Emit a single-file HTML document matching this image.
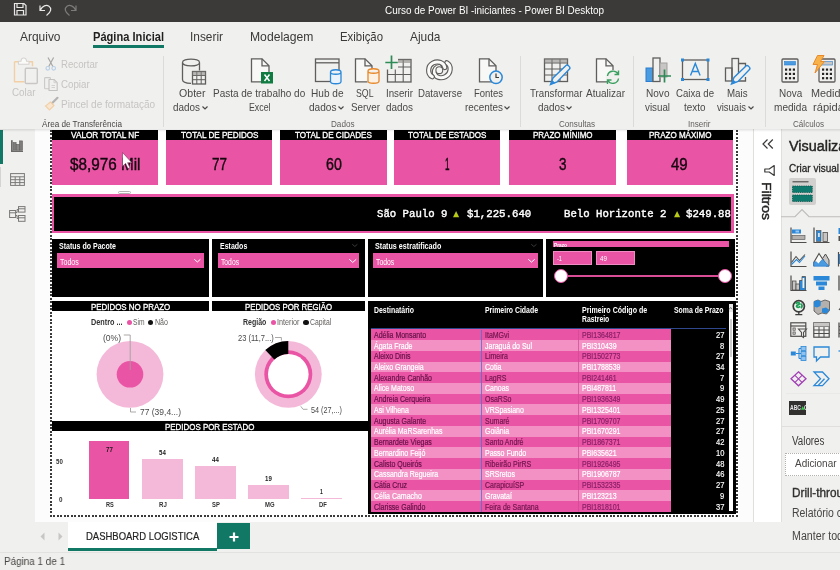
<!DOCTYPE html>
<html><head><meta charset="utf-8">
<style>
*{box-sizing:border-box;margin:0;padding:0}
html,body{width:840px;height:570px;overflow:hidden;background:#f0f0ee;font-family:"Liberation Sans",sans-serif;}
.a{position:absolute}
.t{position:absolute;white-space:nowrap;line-height:1}
svg{position:absolute;overflow:visible}
#w{position:absolute;left:0;top:0;width:840px;height:570px;overflow:hidden}
#b{position:absolute;left:0;top:0;width:840px;height:570px;will-change:transform;filter:blur(0.4px)}
</style></head><body><div id="w"><div id="b">
<!-- sec_chrome -->
<div class="a" style="left:-6.00px;top:-6.00px;width:852.00px;height:27.60px;background:#3b3a38;"></div>
<div class="t" style="left:385.00px;top:5.13px;font-size:11px;color:#ffffff;transform:scaleX(0.9023);transform-origin:0 0;">Curso de Power BI -iniciantes - Power BI Desktop</div>
<svg class="a" style="left:13px;top:2px" width="70" height="16" viewBox="0 0 70 16" fill="none" stroke="#e8e8e8" stroke-width="1.2">
<path d="M1.5 1.5h9.5l2 2v9.5h-11.5z M4 1.5v4h6v-4 M4 13v-4.500h6.500v4.500"/>
<path d="M27 3.500l0 5 5 0 M27.300 8.200c2-4.500 6-5.800 8.700-4c2.600 1.900 2.700 5.500 -2.500 9.300"/>
<path stroke="#7d7c7a" d="M63 3.500l0 5 -5 0 M62.700 8.200c-2 -4.500 -6 -5.800 -8.700 -4c-2.600 1.900 -2.700 5.500 2.500 9.300"/>
</svg>
<div class="a" style="left:-6.00px;top:21.60px;width:852.00px;height:30.40px;background:#f0f0ee;"></div>
<div class="t" style="left:20.00px;top:30.25px;font-size:13px;color:#3b3a39;transform:scaleX(0.9187);transform-origin:0 0;">Arquivo</div>
<div class="t" style="left:93.00px;top:30.25px;font-size:13px;color:#201f1e;font-weight:bold;transform:scaleX(0.8545);transform-origin:0 0;">Página Inicial</div>
<div class="a" style="left:93.00px;top:45.00px;width:71.00px;height:3.00px;background:#117865;"></div>
<div class="t" style="left:190.00px;top:30.25px;font-size:13px;color:#3b3a39;transform:scaleX(0.9136);transform-origin:0 0;">Inserir</div>
<div class="t" style="left:249.50px;top:30.25px;font-size:13px;color:#3b3a39;transform:scaleX(0.9348);transform-origin:0 0;">Modelagem</div>
<div class="t" style="left:340.00px;top:30.25px;font-size:13px;color:#3b3a39;transform:scaleX(0.8750);transform-origin:0 0;">Exibição</div>
<div class="t" style="left:409.50px;top:30.25px;font-size:13px;color:#3b3a39;transform:scaleX(0.9172);transform-origin:0 0;">Ajuda</div>
<!-- sec_ribbon -->
<div class="a" style="left:-6.00px;top:52.00px;width:852.00px;height:76.50px;background:#f0f0ee;"></div>
<div class="a" style="left:163.20px;top:56.00px;width:1.00px;height:71.00px;background:#dddbd9;"></div>
<div class="a" style="left:520.00px;top:56.00px;width:1.00px;height:71.00px;background:#dddbd9;"></div>
<div class="a" style="left:632.70px;top:56.00px;width:1.00px;height:71.00px;background:#dddbd9;"></div>
<div class="a" style="left:764.50px;top:56.00px;width:1.00px;height:71.00px;background:#dddbd9;"></div>
<svg style="left:13px;top:57px" width="26" height="28" viewBox="0 0 26 28" fill="none" ><path d="M1.500 4.800h18v4.500 M1.500 4.800v20h10" stroke="#f2cfa6" stroke-width="1.400" stroke-linejoin="round"/>
<path d="M5.500 7.300v-3h2.500c0-4.500 5.500-4.500 5.500 0h2.500v3z" fill="#fafaf9" stroke="#d6d4d2" stroke-width="1.100" stroke-linejoin="round"/>
<rect x="12.300" y="11.300" width="12" height="15.200" rx="1" stroke="#c9c7c5" stroke-width="1.400" fill="#f0f0ee"/></svg>
<div class="t" style="left:12.00px;top:87.38px;font-size:11.5px;color:#c6c4c2;transform:scaleX(0.8551);transform-origin:0 0;">Colar</div>
<svg style="left:45px;top:57px" width="12" height="14" viewBox="0 0 12 14" fill="none" ><path d="M3 0.500l5 9.300 M8.600 0.500l-5 9.300" stroke="#a9a7a5" stroke-width="1.200"/>
<circle cx="2.800" cy="11.300" r="1.800" stroke="#b9cfe6" stroke-width="1.100"/><circle cx="8.700" cy="11.300" r="1.800" stroke="#b9cfe6" stroke-width="1.100"/></svg>
<div class="t" style="left:61.30px;top:58.68px;font-size:11.5px;color:#c6c4c2;transform:scaleX(0.8390);transform-origin:0 0;">Recortar</div>
<svg style="left:44px;top:77px" width="14" height="14" viewBox="0 0 14 14" fill="none" ><rect x="0.600" y="0.600" width="5.800" height="11.200" rx=".800" stroke="#cbc9c7" stroke-width="1.100"/>
<path d="M5 2.500h5l3.200 3.200v7.800h-8.200z" fill="#f0f0ee" stroke="#c4c2c0" stroke-width="1.100" stroke-linejoin="round"/><path d="M10 2.500v3.200h3.200 M7.500 8.500h3.500 M7.500 10.500h3.500" stroke="#cfcdcb" stroke-width=".900"/></svg>
<div class="t" style="left:61.30px;top:78.88px;font-size:11.5px;color:#c6c4c2;transform:scaleX(0.8471);transform-origin:0 0;">Copiar</div>
<svg style="left:45px;top:97px" width="14" height="14" viewBox="0 0 14 14" fill="none" ><path d="M12.500 0.800l-5.500 5.500" stroke="#b5b3b1" stroke-width="2.200" stroke-linecap="round"/>
<path d="M5.500 5l3.500 3.500-4.500 4.500-4-4z" stroke="#f2cfa6" stroke-width="1.100" fill="#f8e6d0"/></svg>
<div class="t" style="left:61.30px;top:98.88px;font-size:11.5px;color:#c6c4c2;transform:scaleX(0.8719);transform-origin:0 0;">Pincel de formatação</div>
<div class="t" style="left:42.00px;top:118.66px;font-size:9.5px;color:#484644;transform:scaleX(0.8559);transform-origin:0 0;">Área de Transferência</div>
<svg style="left:181px;top:58px" width="26" height="28" viewBox="0 0 26 28" fill="none" ><path d="M1.500 4.500c0-4.500 17-4.500 17 0v8 M1.500 4.500v17c0 2.500 4 3.800 8.500 3.800 M1.500 4.500c0 4.500 17 4.500 17 0" stroke="#5f5e5c" stroke-width="1.300"/>
<rect x="11.500" y="13.500" width="13" height="12.500" fill="#f0f0ee" stroke="#5f5e5c" stroke-width="1.300"/>
<path d="M11.500 17.500h13 M11.500 21.700h13 M15.800 13.500v12.500 M20.200 13.500v12.500" stroke="#5f5e5c" stroke-width="1"/>
<rect x="11.500" y="13.500" width="13" height="4" fill="#8a8886" opacity=".55"/></svg>
<div class="t" style="left:179.00px;top:87.98px;font-size:11.5px;color:#4a4948;transform:scaleX(0.9213);transform-origin:0 0;">Obter</div>
<div class="t" style="left:173.00px;top:101.58px;font-size:11.5px;color:#4a4948;transform:scaleX(0.8616);transform-origin:0 0;">dados</div>
<svg style="left:201.5px;top:106px" width="6" height="4" viewBox="0 0 6 4" fill="none" ><path d="M0.500 0.500l2.500 2.500 2.500-2.500" stroke="#4a4948" stroke-width="1.200"/></svg>
<svg style="left:250px;top:58px" width="24" height="27" viewBox="0 0 24 27" fill="none" ><path d="M1.500 0.800h10.500l7 7v16h-17.500z" stroke="#5f5e5c" stroke-width="1.300" fill="#f8f8f7"/><path d="M12 0.800v7h7" stroke="#5f5e5c" stroke-width="1.300"/>
<rect x="11" y="14" width="12" height="11.500" fill="#107c41"/>
<path d="M14.500 16.500l5 6.500 M19.500 16.500l-5 6.500" stroke="#fff" stroke-width="1.500"/></svg>
<div class="t" style="left:213.30px;top:87.98px;font-size:11.5px;color:#4a4948;transform:scaleX(0.8686);transform-origin:0 0;">Pasta de trabalho do</div>
<div class="t" style="left:249.00px;top:101.58px;font-size:11.5px;color:#4a4948;transform:scaleX(0.7646);transform-origin:0 0;">Excel</div>
<svg style="left:314px;top:58px" width="28" height="28" viewBox="0 0 28 28" fill="none" ><rect x="1.500" y="1" width="23.500" height="22.500" stroke="#5f5e5c" stroke-width="1.300"/><path d="M1.500 4.800h23.500" stroke="#5f5e5c" stroke-width="1.300"/>
<rect x="16.500" y="12" width="10.500" height="14" fill="#f0f0ee" stroke="none"/>
<path d="M16.500 14c0-3 10.500-3 10.500 0v9.500c0 3-10.500 3-10.500 0z M16.500 14c0 3 10.500 3 10.500 0" stroke="#2b88d8" stroke-width="1.300" fill="#eaf3fb"/></svg>
<div class="t" style="left:311.30px;top:87.98px;font-size:11.5px;color:#4a4948;transform:scaleX(0.8763);transform-origin:0 0;">Hub de</div>
<div class="t" style="left:309.00px;top:101.58px;font-size:11.5px;color:#4a4948;transform:scaleX(0.8776);transform-origin:0 0;">dados</div>
<svg style="left:338px;top:106px" width="6" height="4" viewBox="0 0 6 4" fill="none" ><path d="M0.500 0.500l2.500 2.500 2.500-2.500" stroke="#4a4948" stroke-width="1.200"/></svg>
<svg style="left:354px;top:58px" width="27" height="28" viewBox="0 0 27 28" fill="none" ><path d="M1.500 0.800h9.500l7 7v16h-16.500z" stroke="#5f5e5c" stroke-width="1.300" fill="#f8f8f7"/><path d="M11 0.800v7h7" stroke="#5f5e5c" stroke-width="1.300"/>
<rect x="13.500" y="11" width="12" height="15" fill="#f0f0ee"/>
<path d="M14 13c0-3 11-3 11 0v10c0 3-11 3-11 0z M14 13c0 3 11 3 11 0" stroke="#e8892b" stroke-width="1.300" fill="#fdf1e4"/></svg>
<div class="t" style="left:356.30px;top:87.98px;font-size:11.5px;color:#4a4948;transform:scaleX(0.7605);transform-origin:0 0;">SQL</div>
<div class="t" style="left:350.50px;top:101.58px;font-size:11.5px;color:#4a4948;transform:scaleX(0.8561);transform-origin:0 0;">Server</div>
<svg style="left:385px;top:55px" width="28" height="30" viewBox="0 0 28 30" fill="none" ><rect x="2.500" y="4.500" width="23.500" height="22.500" stroke="#5f5e5c" stroke-width="1.300"/>
<path d="M2.500 12h23.500 M2.500 19.500h23.500 M10.300 4.500v22.500 M18.200 4.500v22.500" stroke="#5f5e5c" stroke-width="1.100"/>
<rect x="10.300" y="4.500" width="15.700" height="3.500" fill="#8a8886" opacity=".6"/>
<rect x="0" y="0" width="13" height="14.500" fill="#f0f0ee"/>
<path d="M6.500 0.500v13.500 M0.300 7.500h12.500" stroke="#2e8b57" stroke-width="1.700"/></svg>
<div class="t" style="left:385.50px;top:87.98px;font-size:11.5px;color:#4a4948;transform:scaleX(0.8450);transform-origin:0 0;">Inserir</div>
<div class="t" style="left:385.50px;top:101.58px;font-size:11.5px;color:#4a4948;transform:scaleX(0.8616);transform-origin:0 0;">dados</div>
<svg style="left:420px;top:54px" width="40" height="32" viewBox="0 0 40 32" fill="none" ><g stroke-linecap="round" fill="none"><path d="M26.800 8.700C31.800 11.500 31.200 19.500 25.500 22.600C21 25 15.300 23.500 14.400 19C13.800 15.500 16.500 12.500 19.500 12.500" stroke="#5f5e5c" stroke-width="5.200"/><path d="M26.800 8.700C31.800 11.500 31.200 19.500 25.500 22.600C21 25 15.300 23.500 14.400 19C13.800 15.500 16.500 12.500 19.500 12.500" stroke="#fbfbfa" stroke-width="3"/>
<path d="M12.300 22.800C7.300 20 7.300 12 13 9C18 6.500 23.800 8.500 24.800 13.500" stroke="#5f5e5c" stroke-width="5.200"/><path d="M12.300 22.800C7.300 20 7.300 12 13 9C18 6.500 23.800 8.500 24.800 13.500" stroke="#fbfbfa" stroke-width="3"/>
<circle cx="19.300" cy="16.200" r="3.400" stroke="#5f5e5c" stroke-width="1.100" fill="#f6f6f5"/></g></svg>
<div class="t" style="left:417.50px;top:87.98px;font-size:11.5px;color:#4a4948;transform:scaleX(0.8394);transform-origin:0 0;">Dataverse</div>
<svg style="left:478px;top:58px" width="27" height="28" viewBox="0 0 27 28" fill="none" ><path d="M1.500 0.800h9.500l7 7v16h-16.500z" stroke="#5f5e5c" stroke-width="1.300" fill="#f8f8f7"/><path d="M11 0.800v7h7" stroke="#5f5e5c" stroke-width="1.300"/>
<circle cx="18" cy="19.300" r="6.200" fill="#f0f0ee" stroke="#2b88d8" stroke-width="1.500"/><path d="M18 15.500v4h3" stroke="#3b3a39" stroke-width="1.200"/></svg>
<div class="t" style="left:474.00px;top:87.98px;font-size:11.5px;color:#4a4948;transform:scaleX(0.8248);transform-origin:0 0;">Fontes</div>
<div class="t" style="left:464.50px;top:101.58px;font-size:11.5px;color:#4a4948;transform:scaleX(0.8615);transform-origin:0 0;">recentes</div>
<svg style="left:504px;top:106px" width="6" height="4" viewBox="0 0 6 4" fill="none" ><path d="M0.500 0.500l2.500 2.500 2.500-2.500" stroke="#4a4948" stroke-width="1.200"/></svg>
<div class="t" style="left:331.00px;top:118.66px;font-size:9.5px;color:#605e5c;transform:scaleX(0.8558);transform-origin:0 0;">Dados</div>
<svg style="left:543px;top:58px" width="29" height="28" viewBox="0 0 29 28" fill="none" ><rect x="1.500" y="1" width="23" height="22.500" stroke="#5f5e5c" stroke-width="1.300"/>
<path d="M1.500 5h23 M1.500 11h23 M1.500 17h23 M9 1v22.500 M17 1v22.500" stroke="#5f5e5c" stroke-width="1.100"/>
<rect x="1.500" y="1" width="23" height="4" fill="#8a8886" opacity=".55"/>
<path d="M7.500 26.500l2.500-6.500 13-12.500c1.500-1.500 5 2 3.500 3.500l-12.500 13z" fill="#f0f0ee" stroke="#2b88d8" stroke-width="1.400"/><path d="M7.500 26.500l1.500-4.500 3.500 3z" fill="#2b88d8"/></svg>
<div class="t" style="left:530.00px;top:87.98px;font-size:11.5px;color:#4a4948;transform:scaleX(0.8440);transform-origin:0 0;">Transformar</div>
<div class="t" style="left:537.50px;top:101.58px;font-size:11.5px;color:#4a4948;transform:scaleX(0.8616);transform-origin:0 0;">dados</div>
<svg style="left:566px;top:106px" width="6" height="4" viewBox="0 0 6 4" fill="none" ><path d="M0.500 0.500l2.500 2.500 2.500-2.500" stroke="#4a4948" stroke-width="1.200"/></svg>
<svg style="left:595px;top:58px" width="27" height="28" viewBox="0 0 27 28" fill="none" ><path d="M1.500 0.800h9.500l7 7v16h-16.500z" stroke="#5f5e5c" stroke-width="1.300" fill="#f8f8f7"/><path d="M11 0.800v7h7" stroke="#5f5e5c" stroke-width="1.300"/>
<circle cx="18" cy="19.300" r="7.300" fill="#f0f0ee"/>
<path d="M12.500 18c.8-5.500 8-6.500 10.500-2 M23.500 12.500v4h-4" stroke="#3aa05f" stroke-width="1.400"/><path d="M23.500 20.500c-.8 5.500-8 6.500-10.500 2 M12.500 26v-4h4" stroke="#3aa05f" stroke-width="1.400"/></svg>
<div class="t" style="left:586.00px;top:87.98px;font-size:11.5px;color:#4a4948;transform:scaleX(0.8716);transform-origin:0 0;">Atualizar</div>
<div class="t" style="left:559.00px;top:118.66px;font-size:9.5px;color:#605e5c;transform:scaleX(0.8522);transform-origin:0 0;">Consultas</div>
<svg style="left:645px;top:56px" width="27" height="28" viewBox="0 0 27 28" fill="none" ><rect x="1" y="12" width="7" height="13.500" fill="#4a9be0" stroke="#2b7fd0" stroke-width="1"/>
<rect x="8" y="2" width="7" height="23.500" fill="#f0f0ee" stroke="#5f5e5c" stroke-width="1.300"/>
<rect x="15" y="7" width="7" height="14" fill="#c8c6c4" stroke="#a19f9d" stroke-width="1"/>
<path d="M19.500 13.500v13 M13 20h13" stroke="#2e8b57" stroke-width="1.700"/></svg>
<div class="t" style="left:646.00px;top:87.98px;font-size:11.5px;color:#4a4948;transform:scaleX(0.8753);transform-origin:0 0;">Novo</div>
<div class="t" style="left:645.00px;top:101.58px;font-size:11.5px;color:#4a4948;transform:scaleX(0.8503);transform-origin:0 0;">visual</div>
<svg style="left:681px;top:58px" width="29" height="24" viewBox="0 0 29 24" fill="none" ><rect x="1.500" y="2" width="25.500" height="19.500" stroke="#5f5e5c" stroke-width="1.300"/>
<path d="M9.500 17.500l4.800-12 4.800 12 M11.200 13.500h6.200" stroke="#2b88d8" stroke-width="1.400"/>
<rect x="0" y="0.500" width="3" height="3" fill="#2b88d8"/><rect x="25.500" y="0.500" width="3" height="3" fill="#2b88d8"/><rect x="0" y="20" width="3" height="3" fill="#2b88d8"/><rect x="25.500" y="20" width="3" height="3" fill="#2b88d8"/></svg>
<div class="t" style="left:676.00px;top:87.98px;font-size:11.5px;color:#4a4948;transform:scaleX(0.8372);transform-origin:0 0;">Caixa de</div>
<div class="t" style="left:684.30px;top:101.58px;font-size:11.5px;color:#4a4948;transform:scaleX(0.8623);transform-origin:0 0;">texto</div>
<svg style="left:724px;top:57px" width="28" height="28" viewBox="0 0 28 28" fill="none" ><rect x="1.500" y="11" width="6.500" height="13" stroke="#5f5e5c" stroke-width="1.300"/>
<rect x="8" y="1.500" width="6.500" height="22.500" stroke="#5f5e5c" stroke-width="1.300"/><path d="M14.500 6.500h7v6 M21.500 20v4h-7" stroke="#5f5e5c" stroke-width="1.300"/>
<path d="M7.500 27l2.500-6.500 12-11.500c1.500-1.500 5 2 3.500 3.500l-11.500 12z" fill="#f0f0ee" stroke="#2b88d8" stroke-width="1.400"/><path d="M7.500 27l1.500-4.500 3.500 3z" fill="#2b88d8"/></svg>
<div class="t" style="left:726.50px;top:87.98px;font-size:11.5px;color:#4a4948;transform:scaleX(0.8443);transform-origin:0 0;">Mais</div>
<div class="t" style="left:717.00px;top:101.58px;font-size:11.5px;color:#4a4948;transform:scaleX(0.8250);transform-origin:0 0;">visuais</div>
<svg style="left:747.5px;top:106px" width="6" height="4" viewBox="0 0 6 4" fill="none" ><path d="M0.500 0.500l2.500 2.500 2.500-2.500" stroke="#4a4948" stroke-width="1.200"/></svg>
<div class="t" style="left:687.50px;top:118.66px;font-size:9.5px;color:#605e5c;transform:scaleX(0.8524);transform-origin:0 0;">Inserir</div>
<svg style="left:781px;top:58px" width="18" height="25" viewBox="0 0 18 25" fill="none" ><rect x="1" y="1" width="16" height="23" rx="1" stroke="#5f5e5c" stroke-width="1.300"/><rect x="3.500" y="3.500" width="11" height="3.500" fill="#4a9be0" stroke="#2b7fd0" stroke-width=".600"/><rect x="4.0" y="10.5" width="2.200" height="2.200" fill="#252423"/><rect x="7.9" y="10.5" width="2.200" height="2.200" fill="#252423"/><rect x="11.8" y="10.5" width="2.200" height="2.200" fill="#252423"/><rect x="4.0" y="14.8" width="2.200" height="2.200" fill="#252423"/><rect x="7.9" y="14.8" width="2.200" height="2.200" fill="#252423"/><rect x="11.8" y="14.8" width="2.200" height="2.200" fill="#252423"/><rect x="4.0" y="19.1" width="2.200" height="2.200" fill="#252423"/><rect x="7.9" y="19.1" width="2.200" height="2.200" fill="#252423"/><rect x="11.8" y="19.1" width="2.200" height="2.200" fill="#252423"/></svg>
<div class="t" style="left:778.80px;top:87.98px;font-size:11.5px;color:#4a4948;transform:scaleX(0.8641);transform-origin:0 0;">Nova</div>
<div class="t" style="left:774.00px;top:101.58px;font-size:11.5px;color:#4a4948;transform:scaleX(0.8749);transform-origin:0 0;">medida</div>
<svg style="left:818px;top:58px" width="18" height="25" viewBox="0 0 18 25" fill="none" ><rect x="1" y="1" width="16" height="23" rx="1" stroke="#5f5e5c" stroke-width="1.300"/><rect x="3.500" y="3.500" width="11" height="3.500" fill="#c8c6c4" stroke="#2b7fd0" stroke-width=".600"/><rect x="4.0" y="10.5" width="2.200" height="2.200" fill="#252423"/><rect x="7.9" y="10.5" width="2.200" height="2.200" fill="#252423"/><rect x="11.8" y="10.5" width="2.200" height="2.200" fill="#252423"/><rect x="4.0" y="14.8" width="2.200" height="2.200" fill="#252423"/><rect x="7.9" y="14.8" width="2.200" height="2.200" fill="#252423"/><rect x="11.8" y="14.8" width="2.200" height="2.200" fill="#252423"/><rect x="4.0" y="19.1" width="2.200" height="2.200" fill="#252423"/><rect x="7.9" y="19.1" width="2.200" height="2.200" fill="#252423"/><rect x="11.8" y="19.1" width="2.200" height="2.200" fill="#252423"/></svg>
<svg style="left:812px;top:55px" width="13" height="19" viewBox="0 0 13 19" fill="none" ><path d="M5.500 0.500h6.500l-3.500 6h4l-9.500 11.500 2.500-8.500h-4.500z" fill="#f7b34a" stroke="#e8892b" stroke-width="1"/></svg>
<div class="t" style="left:810.50px;top:87.98px;font-size:11.5px;color:#4a4948;transform:scaleX(0.9411);transform-origin:0 0;">Medida</div>
<div class="t" style="left:813.00px;top:101.58px;font-size:11.5px;color:#4a4948;transform:scaleX(0.9696);transform-origin:0 0;">rápida</div>
<div class="t" style="left:793.00px;top:118.66px;font-size:9.5px;color:#605e5c;transform:scaleX(0.8509);transform-origin:0 0;">Cálculos</div>
<!-- sec_left -->
<div class="a" style="left:-6.00px;top:128.50px;width:41.00px;height:393.50px;background:#f0f0ee;"></div>
<div class="a" style="left:-6.00px;top:129.50px;width:8.50px;height:34.00px;background:#117865;"></div>
<div class="a" style="left:-6.00px;top:166.50px;width:7.00px;height:20.50px;background:#d6d4d2;"></div>
<div class="a" style="left:35.00px;top:128.50px;width:719.00px;height:393.50px;background:#fcfcfc;"></div>
<svg style="left:11px;top:140px" width="12" height="12" viewBox="0 0 12 12"><rect x="0" y="0.200" width="1.700" height="11.800" fill="#6b6a68"/><rect x="0" y="10.600" width="12" height="1.400" fill="#6b6a68"/>
<rect x="2.100" y="2.600" width="3" height="7.600" fill="#7d7c7a" stroke="#5f5e5c" stroke-width=".600"/><rect x="5.300" y="4.400" width="3" height="5.800" fill="#8a8987" stroke="#5f5e5c" stroke-width=".600"/><rect x="8.500" y="0.900" width="3" height="9.300" fill="#7d7c7a" stroke="#5f5e5c" stroke-width=".600"/></svg>
<svg style="left:10px;top:173px" width="15" height="13" viewBox="0 0 15 13" fill="none" stroke="#7a7977" stroke-width="1"><rect x="0.600" y="0.600" width="13.800" height="11.800"/><path d="M0.600 3.800h13.800 M0.600 6.700h13.800 M0.600 9.600h13.800 M5.200 3.800v8.600 M9.800 3.800v8.600"/></svg>
<svg style="left:9px;top:206px" width="17" height="16" viewBox="0 0 17 16" fill="none" stroke="#7a7977" stroke-width="1"><rect x="0.600" y="4.500" width="6" height="7"/><rect x="9.500" y="0.600" width="6.500" height="5.500"/><rect x="9.500" y="9.500" width="6.500" height="5.800"/><path d="M6.600 6.500h1.500v-3h1.400 M6.600 9.500h1.500v3h1.400 M0.600 6.800h6 M9.500 2.800h6.500 M9.500 11.800h6.500"/></svg>
<!-- sec_report -->
<div class="a" style="left:50.50px;top:128.50px;width:688.00px;height:388.30px;background:#ffffff;"></div>
<div class="a" style="left:50.30px;top:129.50px;width:1.70px;height:387.30px;background:none;background:repeating-linear-gradient(to bottom,#3a3a3a 0,#3a3a3a 1.800px,transparent 1.800px,transparent 3.500px);"></div>
<div class="a" style="left:736.30px;top:129.50px;width:1.90px;height:387.30px;background:none;background:repeating-linear-gradient(to bottom,#3a3a3a 0,#3a3a3a 1.800px,transparent 1.800px,transparent 3.500px);"></div>
<div class="a" style="left:50.30px;top:515.00px;width:687.90px;height:1.80px;background:none;background:repeating-linear-gradient(to right,#3a3a3a 0,#3a3a3a 1.800px,transparent 1.800px,transparent 3.500px);"></div>
<div class="a" style="left:52.00px;top:129.50px;width:106.20px;height:10.70px;background:#000;"></div>
<div class="a" style="left:52.00px;top:140.20px;width:106.20px;height:44.80px;background:#e954a4;"></div>
<div class="t" style="left:71.30px;top:130.36px;font-size:9.5px;color:#fff;-webkit-text-stroke:0.35px #fff;transform:scaleX(0.8671);transform-origin:0 0;">VALOR TOTAL NF</div>
<div class="t" style="left:70.00px;top:156.00px;font-size:17px;color:#14080f;-webkit-text-stroke:0.4px #14080f;transform:scaleX(0.8988);transform-origin:0 0;">$8,976 Mil</div>
<div class="a" style="left:165.80px;top:129.50px;width:106.20px;height:10.70px;background:#000;"></div>
<div class="a" style="left:165.80px;top:140.20px;width:106.20px;height:44.80px;background:#e954a4;"></div>
<div class="t" style="left:180.80px;top:130.36px;font-size:9.5px;color:#fff;-webkit-text-stroke:0.35px #fff;transform:scaleX(0.8552);transform-origin:0 0;">TOTAL DE PEDIDOS</div>
<div class="t" style="left:212.00px;top:156.00px;font-size:17px;color:#14080f;-webkit-text-stroke:0.4px #14080f;transform:scaleX(0.7932);transform-origin:0 0;">77</div>
<div class="a" style="left:279.50px;top:129.50px;width:107.00px;height:10.70px;background:#000;"></div>
<div class="a" style="left:279.50px;top:140.20px;width:107.00px;height:44.80px;background:#e954a4;"></div>
<div class="t" style="left:295.00px;top:130.36px;font-size:9.5px;color:#fff;-webkit-text-stroke:0.35px #fff;transform:scaleX(0.8525);transform-origin:0 0;">TOTAL DE CIDADES</div>
<div class="t" style="left:325.50px;top:156.00px;font-size:17px;color:#14080f;-webkit-text-stroke:0.4px #14080f;transform:scaleX(0.8355);transform-origin:0 0;">60</div>
<div class="a" style="left:393.50px;top:129.50px;width:106.50px;height:10.70px;background:#000;"></div>
<div class="a" style="left:393.50px;top:140.20px;width:106.50px;height:44.80px;background:#e954a4;"></div>
<div class="t" style="left:408.00px;top:130.36px;font-size:9.5px;color:#fff;-webkit-text-stroke:0.35px #fff;transform:scaleX(0.8460);transform-origin:0 0;">TOTAL DE ESTADOS</div>
<div class="t" style="left:445.00px;top:156.00px;font-size:17px;color:#14080f;-webkit-text-stroke:0.4px #14080f;transform:scaleX(0.4759);transform-origin:0 0;">1</div>
<div class="a" style="left:509.00px;top:129.50px;width:107.00px;height:10.70px;background:#000;"></div>
<div class="a" style="left:509.00px;top:140.20px;width:107.00px;height:44.80px;background:#e954a4;"></div>
<div class="t" style="left:533.00px;top:130.36px;font-size:9.5px;color:#fff;-webkit-text-stroke:0.35px #fff;transform:scaleX(0.8414);transform-origin:0 0;">PRAZO MÍNIMO</div>
<div class="t" style="left:558.80px;top:156.00px;font-size:17px;color:#14080f;-webkit-text-stroke:0.4px #14080f;transform:scaleX(0.7932);transform-origin:0 0;">3</div>
<div class="a" style="left:626.50px;top:129.50px;width:106.50px;height:10.70px;background:#000;"></div>
<div class="a" style="left:626.50px;top:140.20px;width:106.50px;height:44.80px;background:#e954a4;"></div>
<div class="t" style="left:648.80px;top:130.36px;font-size:9.5px;color:#fff;-webkit-text-stroke:0.35px #fff;transform:scaleX(0.8458);transform-origin:0 0;">PRAZO MÁXIMO</div>
<div class="t" style="left:671.30px;top:156.00px;font-size:17px;color:#14080f;-webkit-text-stroke:0.4px #14080f;transform:scaleX(0.8831);transform-origin:0 0;">49</div>
<svg style="left:122px;top:151.800px" width="12" height="18" viewBox="0 0 12 18"><path d="M0.500 0.500v13.800l3.100-2.900 2.300 5.200 2-0.900-2.300-5h4.300z" fill="#fff" stroke="#7a2a58" stroke-width=".600" stroke-linejoin="round"/></svg>
<div class="a" style="left:118.30px;top:191.30px;width:13.00px;height:3.00px;background:#fff;border:1px solid #b5b3b1;border-radius:1.500px;"></div>
<div class="a" style="left:52.00px;top:194.30px;width:681.70px;height:39.20px;background:#e954a4;"></div>
<div class="a" style="left:54.00px;top:197.00px;width:677.20px;height:34.40px;background:#000;"></div>
<div class="t" style="left:376.80px;top:208.57px;font-size:10.7px;color:#fff;-webkit-text-stroke:0.4px #fff;font-family:'Liberation Mono',monospace;transform:scaleX(0.9983);transform-origin:0 0;">São Paulo 9</div>
<svg style="left:453.4px;top:211px" width="6.2" height="6.2" viewBox="0 0 10 10" preserveAspectRatio="none"><path d="M5 0L10 10H0z" fill="#b7ca18"/></svg>
<div class="t" style="left:467.00px;top:208.57px;font-size:10.7px;color:#fff;-webkit-text-stroke:0.4px #fff;font-family:'Liberation Mono',monospace;transform:scaleX(1.0016);transform-origin:0 0;">$1,225.640</div>
<div class="t" style="left:563.80px;top:208.57px;font-size:10.7px;color:#fff;-webkit-text-stroke:0.4px #fff;font-family:'Liberation Mono',monospace;transform:scaleX(0.9979);transform-origin:0 0;">Belo Horizonte 2</div>
<svg style="left:673.9px;top:211px" width="6.2" height="6.2" viewBox="0 0 10 10" preserveAspectRatio="none"><path d="M5 0L10 10H0z" fill="#b7ca18"/></svg>
<div class="t" style="left:685.80px;top:208.57px;font-size:10.7px;color:#fff;-webkit-text-stroke:0.4px #fff;font-family:'Liberation Mono',monospace;transform:scaleX(1.0013);transform-origin:0 0;">$249.88</div>
<div class="a" style="left:52.00px;top:238.80px;width:156.80px;height:58.70px;background:#000;"></div>
<div class="t" style="left:58.80px;top:241.36px;font-size:9.5px;color:#fff;font-weight:bold;transform:scaleX(0.7396);transform-origin:0 0;">Status do Pacote</div>
<div class="a" style="left:57.00px;top:253.30px;width:146.80px;height:15.00px;background:#e954a4;"></div>
<div class="t" style="left:60.00px;top:257.60px;font-size:9px;color:#fff;transform:scaleX(0.7828);transform-origin:0 0;">Todos</div>
<svg style="left:193.8px;top:259.46px" width="6.699999999999989" height="3.48" viewBox="0 0 6.699999999999989 3.48" fill="none"><path d="M0.300 0.300L3.3499999999999943 2.98L6.399999999999989 0.300" stroke="#fff" stroke-width="1"/></svg>
<div class="a" style="left:212.00px;top:238.80px;width:152.50px;height:58.70px;background:#000;"></div>
<div class="t" style="left:219.50px;top:241.36px;font-size:9.5px;color:#fff;font-weight:bold;transform:scaleX(0.7387);transform-origin:0 0;">Estados</div>
<div class="a" style="left:217.50px;top:253.30px;width:141.80px;height:15.00px;background:#e954a4;"></div>
<div class="t" style="left:221.30px;top:257.60px;font-size:9px;color:#fff;transform:scaleX(0.7495);transform-origin:0 0;">Todos</div>
<svg style="left:349.3px;top:259.25px" width="7.5" height="3.90" viewBox="0 0 7.5 3.90" fill="none"><path d="M0.300 0.300L3.75 3.40L7.2 0.300" stroke="#fff" stroke-width="1"/></svg>
<svg style="left:351.8px;top:243.72px" width="5.699999999999989" height="2.96" viewBox="0 0 5.699999999999989 2.96" fill="none"><path d="M0.300 0.300L2.8499999999999943 2.46L5.399999999999989 0.300" stroke="#3a3a3a" stroke-width="1"/></svg>
<div class="a" style="left:368.00px;top:238.80px;width:175.30px;height:58.70px;background:#000;"></div>
<div class="t" style="left:375.00px;top:241.36px;font-size:9.5px;color:#fff;font-weight:bold;transform:scaleX(0.7520);transform-origin:0 0;">Status estratificado</div>
<div class="a" style="left:373.00px;top:253.30px;width:165.00px;height:15.00px;background:#e954a4;"></div>
<div class="t" style="left:376.30px;top:257.60px;font-size:9px;color:#fff;transform:scaleX(0.7578);transform-origin:0 0;">Todos</div>
<svg style="left:528px;top:259.38px" width="7" height="3.64" viewBox="0 0 7 3.64" fill="none"><path d="M0.300 0.300L3.5 3.14L6.7 0.300" stroke="#fff" stroke-width="1"/></svg>
<svg style="left:530.5px;top:243.69px" width="5.7999999999999545" height="3.02" viewBox="0 0 5.7999999999999545 3.02" fill="none"><path d="M0.300 0.300L2.8999999999999773 2.52L5.499999999999955 0.300" stroke="#3a3a3a" stroke-width="1"/></svg>
<div class="a" style="left:546.30px;top:238.80px;width:189.20px;height:58.70px;background:#000;"></div>
<div class="a" style="left:553.00px;top:241.30px;width:175.80px;height:6.20px;background:#e954a4;"></div>
<div class="t" style="left:553.50px;top:241.67px;font-size:6px;color:#fff;font-weight:bold;transform:scaleX(0.7955);transform-origin:0 0;">Prazo</div>
<div class="a" style="left:553.30px;top:251.30px;width:39.20px;height:13.70px;background:#e954a4;border:1px solid #f08cc3;"></div>
<div class="a" style="left:595.80px;top:251.30px;width:39.70px;height:13.70px;background:#e954a4;border:1px solid #f08cc3;"></div>
<div class="t" style="left:557.00px;top:254.94px;font-size:7.5px;color:#fff;transform:scaleX(0.7496);transform-origin:0 0;">-1</div>
<div class="t" style="left:599.50px;top:254.94px;font-size:7.5px;color:#fff;transform:scaleX(0.8390);transform-origin:0 0;">49</div>
<div class="a" style="left:561.00px;top:275.30px;width:164.00px;height:1.90px;background:#d94d97;"></div>
<div class="a" style="left:554.3px;top:269.3px;width:14px;height:14px;border-radius:50%;background:#fff;border:1.300px solid #e954a4"></div>
<div class="a" style="left:717.5px;top:269.3px;width:14px;height:14px;border-radius:50%;background:#fff;border:1.300px solid #e954a4"></div>
<!-- sec_report2 -->
<div class="a" style="left:52.00px;top:301.30px;width:156.80px;height:10.20px;background:#000;"></div>
<div class="t" style="left:90.80px;top:301.86px;font-size:9.5px;color:#fff;-webkit-text-stroke:0.35px #fff;transform:scaleX(0.8336);transform-origin:0 0;">PEDIDOS NO PRAZO</div>
<div class="a" style="left:212.00px;top:301.30px;width:152.50px;height:10.20px;background:#000;"></div>
<div class="t" style="left:245.00px;top:301.86px;font-size:9.5px;color:#fff;-webkit-text-stroke:0.35px #fff;transform:scaleX(0.8241);transform-origin:0 0;">PEDIDOS POR REGIÃO</div>
<div class="t" style="left:90.50px;top:318.35px;font-size:8.5px;color:#333;font-weight:bold;transform:scaleX(0.8552);transform-origin:0 0;">Dentro ...</div>
<div class="a" style="left:126.500px;top:320px;width:5px;height:5px;border-radius:50%;background:#e954a4"></div>
<div class="t" style="left:133.00px;top:318.35px;font-size:8.5px;color:#605e5c;transform:scaleX(0.7856);transform-origin:0 0;">Sim</div>
<div class="a" style="left:148px;top:320px;width:5px;height:5px;border-radius:50%;background:#111"></div>
<div class="t" style="left:154.50px;top:318.35px;font-size:8.5px;color:#605e5c;transform:scaleX(0.8338);transform-origin:0 0;">Não</div>
<svg style="left:0;top:0" width="420" height="520" viewBox="0 0 420 520" fill="none"><circle cx="130" cy="374.3" r="33.400" fill="#f4b9d9"/><circle cx="130" cy="374.3" r="13.300" fill="#e954a4"/><path d="M123.800 335h6.400v35" stroke="#a19f9d" stroke-width="0.900"/><path d="M130.500 408v4h5.500" stroke="#a19f9d" stroke-width="0.900"/><circle cx="288.3" cy="374.3" r="33.400" fill="#f4b9d9"/><circle cx="288.3" cy="374.3" r="24" fill="#e954a4"/><circle cx="288.3" cy="374.3" r="20.300" fill="#fff"/><path d="M288.30 340.90A33.4 33.4 0 0 0 265.31 350.07L274.33 359.57A20.3 20.3 0 0 1 288.30 354.00z" fill="#000"/><path d="M275 337.500h6.400v3" stroke="#a19f9d" stroke-width="0.900"/><path d="M300.800 406.300l2.200 3h4.500" stroke="#a19f9d" stroke-width="0.900"/></svg>
<div class="t" style="left:103.00px;top:333.60px;font-size:9px;color:#4a4a4a;transform:scaleX(0.9472);transform-origin:0 0;">(0%)</div>
<div class="t" style="left:140.00px;top:408.10px;font-size:9px;color:#4a4a4a;transform:scaleX(0.9420);transform-origin:0 0;">77 (39,4...)</div>
<div class="t" style="left:243.00px;top:318.35px;font-size:8.5px;color:#333;font-weight:bold;transform:scaleX(0.8223);transform-origin:0 0;">Região</div>
<div class="a" style="left:270.500px;top:320px;width:5px;height:5px;border-radius:50%;background:#e954a4"></div>
<div class="t" style="left:277.00px;top:318.35px;font-size:8.5px;color:#605e5c;transform:scaleX(0.8506);transform-origin:0 0;">Interior</div>
<div class="a" style="left:303px;top:319.700px;width:5.600px;height:5.600px;border-radius:50%;background:#111"></div>
<div class="t" style="left:310.00px;top:318.35px;font-size:8.5px;color:#605e5c;transform:scaleX(0.8051);transform-origin:0 0;">Capital</div>
<div class="t" style="left:237.50px;top:333.90px;font-size:9px;color:#4a4a4a;transform:scaleX(0.8353);transform-origin:0 0;">23 (11,7...)</div>
<div class="t" style="left:310.80px;top:405.60px;font-size:9px;color:#4a4a4a;transform:scaleX(0.8048);transform-origin:0 0;">54 (27,...)</div>
<div class="a" style="left:52.00px;top:421.30px;width:316.00px;height:10.00px;background:#000;"></div>
<div class="t" style="left:165.00px;top:421.76px;font-size:9.5px;color:#fff;-webkit-text-stroke:0.35px #fff;transform:scaleX(0.8348);transform-origin:0 0;">PEDIDOS POR ESTADO</div>
<div class="a" style="left:88.80px;top:441.30px;width:40.70px;height:57.50px;background:#e954a4;"></div>
<div class="t" style="left:105.90px;top:445.78px;font-size:7.2px;color:#1a1a1a;font-weight:bold;transform:scaleX(0.8492);transform-origin:0 0;">77</div>
<div class="t" style="left:105.60px;top:501.38px;font-size:7px;color:#333;font-weight:bold;transform:scaleX(0.8021);transform-origin:0 0;">RS</div>
<div class="a" style="left:142.00px;top:458.80px;width:40.50px;height:40.00px;background:#f4b9d9;"></div>
<div class="t" style="left:158.60px;top:448.98px;font-size:7.2px;color:#1a1a1a;font-weight:bold;transform:scaleX(0.8492);transform-origin:0 0;">54</div>
<div class="t" style="left:158.60px;top:501.38px;font-size:7px;color:#333;font-weight:bold;transform:scaleX(0.8718);transform-origin:0 0;">RJ</div>
<div class="a" style="left:195.00px;top:466.30px;width:40.80px;height:32.50px;background:#f4b9d9;"></div>
<div class="t" style="left:212.10px;top:455.98px;font-size:7.2px;color:#1a1a1a;font-weight:bold;transform:scaleX(0.8492);transform-origin:0 0;">44</div>
<div class="t" style="left:211.90px;top:501.38px;font-size:7px;color:#333;font-weight:bold;transform:scaleX(0.8351);transform-origin:0 0;">SP</div>
<div class="a" style="left:248.30px;top:484.50px;width:40.50px;height:14.30px;background:#f4b9d9;"></div>
<div class="t" style="left:265.40px;top:474.78px;font-size:7.2px;color:#1a1a1a;font-weight:bold;transform:scaleX(0.8492);transform-origin:0 0;">19</div>
<div class="t" style="left:264.55px;top:501.38px;font-size:7px;color:#333;font-weight:bold;transform:scaleX(0.8424);transform-origin:0 0;">MG</div>
<div class="a" style="left:301.30px;top:497.60px;width:40.70px;height:1.20px;background:#f4b9d9;"></div>
<div class="t" style="left:320.40px;top:488.28px;font-size:7.2px;color:#1a1a1a;font-weight:bold;transform:scaleX(0.6993);transform-origin:0 0;">1</div>
<div class="t" style="left:318.60px;top:501.38px;font-size:7px;color:#333;font-weight:bold;transform:scaleX(0.8360);transform-origin:0 0;">DF</div>
<div class="t" style="left:55.50px;top:458.38px;font-size:7px;color:#333;font-weight:bold;transform:scaleX(0.8735);transform-origin:0 0;">50</div>
<div class="t" style="left:58.80px;top:495.58px;font-size:7px;color:#333;font-weight:bold;transform:scaleX(0.8991);transform-origin:0 0;">0</div>
<!-- sec_table -->
<div class="a" style="left:368.00px;top:301.30px;width:367.50px;height:212.30px;background:#000;"></div>
<div class="t" style="left:373.80px;top:305.85px;font-size:8.5px;color:#fff;font-weight:bold;transform:scaleX(0.8143);transform-origin:0 0;">Destinatário</div>
<div class="t" style="left:485.00px;top:305.85px;font-size:8.5px;color:#fff;font-weight:bold;transform:scaleX(0.8131);transform-origin:0 0;">Primeiro Cidade</div>
<div class="t" style="left:581.80px;top:305.85px;font-size:8.5px;color:#fff;font-weight:bold;transform:scaleX(0.8317);transform-origin:0 0;">Primeiro Código de</div>
<div class="t" style="left:581.80px;top:315.15px;font-size:8.5px;color:#fff;font-weight:bold;transform:scaleX(0.7998);transform-origin:0 0;">Rastreio</div>
<div class="t" style="left:673.80px;top:305.85px;font-size:8.5px;color:#fff;font-weight:bold;transform:scaleX(0.8124);transform-origin:0 0;">Soma de Prazo</div>
<div class="a" style="left:370.80px;top:329.30px;width:300.00px;height:10.74px;background:#e954a4;"></div>
<div class="t" style="left:373.80px;top:330.77px;font-size:8.4px;color:#651248;-webkit-text-stroke:0.2px #651248;transform:scaleX(0.8350);transform-origin:0 0;">Adélia Monsanto</div>
<div class="t" style="left:485.00px;top:330.77px;font-size:8.4px;color:#72164f;-webkit-text-stroke:0.2px #72164f;transform:scaleX(0.8350);transform-origin:0 0;">ItaMGvi</div>
<div class="t" style="left:581.80px;top:330.77px;font-size:8.4px;color:#8a2068;-webkit-text-stroke:0.2px #8a2068;transform:scaleX(0.8350);transform-origin:0 0;">PBI1364817</div>
<div class="t" style="left:715.89px;top:330.77px;font-size:8.4px;color:#fff;-webkit-text-stroke:0.15px #fff;transform:scaleX(0.9000);transform-origin:0 0;">27</div>
<div class="a" style="left:370.80px;top:340.04px;width:300.00px;height:10.74px;background:#f391c5;"></div>
<div class="t" style="left:373.80px;top:341.51px;font-size:8.4px;color:#ffffff;-webkit-text-stroke:0.2px #ffffff;transform:scaleX(0.8350);transform-origin:0 0;">Ágata Frade</div>
<div class="t" style="left:485.00px;top:341.51px;font-size:8.4px;color:#ffffff;-webkit-text-stroke:0.2px #ffffff;transform:scaleX(0.8350);transform-origin:0 0;">Jaraguá do Sul</div>
<div class="t" style="left:581.80px;top:341.51px;font-size:8.4px;color:#ffffff;-webkit-text-stroke:0.2px #ffffff;transform:scaleX(0.8350);transform-origin:0 0;">PBI310439</div>
<div class="t" style="left:720.10px;top:341.51px;font-size:8.4px;color:#fff;-webkit-text-stroke:0.15px #fff;transform:scaleX(0.9000);transform-origin:0 0;">8</div>
<div class="a" style="left:370.80px;top:350.78px;width:300.00px;height:10.74px;background:#e954a4;"></div>
<div class="t" style="left:373.80px;top:352.25px;font-size:8.4px;color:#651248;-webkit-text-stroke:0.2px #651248;transform:scaleX(0.8350);transform-origin:0 0;">Aleixo Dinis</div>
<div class="t" style="left:485.00px;top:352.25px;font-size:8.4px;color:#72164f;-webkit-text-stroke:0.2px #72164f;transform:scaleX(0.8350);transform-origin:0 0;">Limeira</div>
<div class="t" style="left:581.80px;top:352.25px;font-size:8.4px;color:#8a2068;-webkit-text-stroke:0.2px #8a2068;transform:scaleX(0.8350);transform-origin:0 0;">PBI1502773</div>
<div class="t" style="left:715.89px;top:352.25px;font-size:8.4px;color:#fff;-webkit-text-stroke:0.15px #fff;transform:scaleX(0.9000);transform-origin:0 0;">27</div>
<div class="a" style="left:370.80px;top:361.52px;width:300.00px;height:10.74px;background:#f391c5;"></div>
<div class="t" style="left:373.80px;top:362.99px;font-size:8.4px;color:#ffffff;-webkit-text-stroke:0.2px #ffffff;transform:scaleX(0.8350);transform-origin:0 0;">Aleixo Grangeia</div>
<div class="t" style="left:485.00px;top:362.99px;font-size:8.4px;color:#ffffff;-webkit-text-stroke:0.2px #ffffff;transform:scaleX(0.8350);transform-origin:0 0;">Cotia</div>
<div class="t" style="left:581.80px;top:362.99px;font-size:8.4px;color:#ffffff;-webkit-text-stroke:0.2px #ffffff;transform:scaleX(0.8350);transform-origin:0 0;">PBI1788539</div>
<div class="t" style="left:715.89px;top:362.99px;font-size:8.4px;color:#fff;-webkit-text-stroke:0.15px #fff;transform:scaleX(0.9000);transform-origin:0 0;">34</div>
<div class="a" style="left:370.80px;top:372.26px;width:300.00px;height:10.74px;background:#e954a4;"></div>
<div class="t" style="left:373.80px;top:373.73px;font-size:8.4px;color:#651248;-webkit-text-stroke:0.2px #651248;transform:scaleX(0.8350);transform-origin:0 0;">Alexandre Canhão</div>
<div class="t" style="left:485.00px;top:373.73px;font-size:8.4px;color:#72164f;-webkit-text-stroke:0.2px #72164f;transform:scaleX(0.8350);transform-origin:0 0;">LagRS</div>
<div class="t" style="left:581.80px;top:373.73px;font-size:8.4px;color:#8a2068;-webkit-text-stroke:0.2px #8a2068;transform:scaleX(0.8350);transform-origin:0 0;">PBI241461</div>
<div class="t" style="left:720.10px;top:373.73px;font-size:8.4px;color:#fff;-webkit-text-stroke:0.15px #fff;transform:scaleX(0.9000);transform-origin:0 0;">7</div>
<div class="a" style="left:370.80px;top:383.00px;width:300.00px;height:10.74px;background:#f391c5;"></div>
<div class="t" style="left:373.80px;top:384.47px;font-size:8.4px;color:#ffffff;-webkit-text-stroke:0.2px #ffffff;transform:scaleX(0.8350);transform-origin:0 0;">Alice Matoso</div>
<div class="t" style="left:485.00px;top:384.47px;font-size:8.4px;color:#ffffff;-webkit-text-stroke:0.2px #ffffff;transform:scaleX(0.8350);transform-origin:0 0;">Canoas</div>
<div class="t" style="left:581.80px;top:384.47px;font-size:8.4px;color:#ffffff;-webkit-text-stroke:0.2px #ffffff;transform:scaleX(0.8350);transform-origin:0 0;">PBI487811</div>
<div class="t" style="left:720.10px;top:384.47px;font-size:8.4px;color:#fff;-webkit-text-stroke:0.15px #fff;transform:scaleX(0.9000);transform-origin:0 0;">9</div>
<div class="a" style="left:370.80px;top:393.74px;width:300.00px;height:10.74px;background:#e954a4;"></div>
<div class="t" style="left:373.80px;top:395.21px;font-size:8.4px;color:#651248;-webkit-text-stroke:0.2px #651248;transform:scaleX(0.8350);transform-origin:0 0;">Andreia Cerqueira</div>
<div class="t" style="left:485.00px;top:395.21px;font-size:8.4px;color:#72164f;-webkit-text-stroke:0.2px #72164f;transform:scaleX(0.8350);transform-origin:0 0;">OsaRSo</div>
<div class="t" style="left:581.80px;top:395.21px;font-size:8.4px;color:#8a2068;-webkit-text-stroke:0.2px #8a2068;transform:scaleX(0.8350);transform-origin:0 0;">PBI1936349</div>
<div class="t" style="left:715.89px;top:395.21px;font-size:8.4px;color:#fff;-webkit-text-stroke:0.15px #fff;transform:scaleX(0.9000);transform-origin:0 0;">49</div>
<div class="a" style="left:370.80px;top:404.48px;width:300.00px;height:10.74px;background:#f391c5;"></div>
<div class="t" style="left:373.80px;top:405.95px;font-size:8.4px;color:#ffffff;-webkit-text-stroke:0.2px #ffffff;transform:scaleX(0.8350);transform-origin:0 0;">Asi Vilhena</div>
<div class="t" style="left:485.00px;top:405.95px;font-size:8.4px;color:#ffffff;-webkit-text-stroke:0.2px #ffffff;transform:scaleX(0.8350);transform-origin:0 0;">VRSpasiano</div>
<div class="t" style="left:581.80px;top:405.95px;font-size:8.4px;color:#ffffff;-webkit-text-stroke:0.2px #ffffff;transform:scaleX(0.8350);transform-origin:0 0;">PBI1325401</div>
<div class="t" style="left:715.89px;top:405.95px;font-size:8.4px;color:#fff;-webkit-text-stroke:0.15px #fff;transform:scaleX(0.9000);transform-origin:0 0;">25</div>
<div class="a" style="left:370.80px;top:415.22px;width:300.00px;height:10.74px;background:#e954a4;"></div>
<div class="t" style="left:373.80px;top:416.69px;font-size:8.4px;color:#651248;-webkit-text-stroke:0.2px #651248;transform:scaleX(0.8350);transform-origin:0 0;">Augusta Galante</div>
<div class="t" style="left:485.00px;top:416.69px;font-size:8.4px;color:#72164f;-webkit-text-stroke:0.2px #72164f;transform:scaleX(0.8350);transform-origin:0 0;">Sumaré</div>
<div class="t" style="left:581.80px;top:416.69px;font-size:8.4px;color:#8a2068;-webkit-text-stroke:0.2px #8a2068;transform:scaleX(0.8350);transform-origin:0 0;">PBI1709707</div>
<div class="t" style="left:715.89px;top:416.69px;font-size:8.4px;color:#fff;-webkit-text-stroke:0.15px #fff;transform:scaleX(0.9000);transform-origin:0 0;">27</div>
<div class="a" style="left:370.80px;top:425.96px;width:300.00px;height:10.74px;background:#f391c5;"></div>
<div class="t" style="left:373.80px;top:427.43px;font-size:8.4px;color:#ffffff;-webkit-text-stroke:0.2px #ffffff;transform:scaleX(0.8350);transform-origin:0 0;">Aurélia MaRSarenhas</div>
<div class="t" style="left:485.00px;top:427.43px;font-size:8.4px;color:#ffffff;-webkit-text-stroke:0.2px #ffffff;transform:scaleX(0.8350);transform-origin:0 0;">Goiânia</div>
<div class="t" style="left:581.80px;top:427.43px;font-size:8.4px;color:#ffffff;-webkit-text-stroke:0.2px #ffffff;transform:scaleX(0.8350);transform-origin:0 0;">PBI1670291</div>
<div class="t" style="left:715.89px;top:427.43px;font-size:8.4px;color:#fff;-webkit-text-stroke:0.15px #fff;transform:scaleX(0.9000);transform-origin:0 0;">27</div>
<div class="a" style="left:370.80px;top:436.70px;width:300.00px;height:10.74px;background:#e954a4;"></div>
<div class="t" style="left:373.80px;top:438.17px;font-size:8.4px;color:#651248;-webkit-text-stroke:0.2px #651248;transform:scaleX(0.8350);transform-origin:0 0;">Bernardete Viegas</div>
<div class="t" style="left:485.00px;top:438.17px;font-size:8.4px;color:#72164f;-webkit-text-stroke:0.2px #72164f;transform:scaleX(0.8350);transform-origin:0 0;">Santo André</div>
<div class="t" style="left:581.80px;top:438.17px;font-size:8.4px;color:#8a2068;-webkit-text-stroke:0.2px #8a2068;transform:scaleX(0.8350);transform-origin:0 0;">PBI1867371</div>
<div class="t" style="left:715.89px;top:438.17px;font-size:8.4px;color:#fff;-webkit-text-stroke:0.15px #fff;transform:scaleX(0.9000);transform-origin:0 0;">42</div>
<div class="a" style="left:370.80px;top:447.44px;width:300.00px;height:10.74px;background:#f391c5;"></div>
<div class="t" style="left:373.80px;top:448.91px;font-size:8.4px;color:#ffffff;-webkit-text-stroke:0.2px #ffffff;transform:scaleX(0.8350);transform-origin:0 0;">Bernardino Feijó</div>
<div class="t" style="left:485.00px;top:448.91px;font-size:8.4px;color:#ffffff;-webkit-text-stroke:0.2px #ffffff;transform:scaleX(0.8350);transform-origin:0 0;">Passo Fundo</div>
<div class="t" style="left:581.80px;top:448.91px;font-size:8.4px;color:#ffffff;-webkit-text-stroke:0.2px #ffffff;transform:scaleX(0.8350);transform-origin:0 0;">PBI635621</div>
<div class="t" style="left:715.89px;top:448.91px;font-size:8.4px;color:#fff;-webkit-text-stroke:0.15px #fff;transform:scaleX(0.9000);transform-origin:0 0;">10</div>
<div class="a" style="left:370.80px;top:458.18px;width:300.00px;height:10.74px;background:#e954a4;"></div>
<div class="t" style="left:373.80px;top:459.65px;font-size:8.4px;color:#651248;-webkit-text-stroke:0.2px #651248;transform:scaleX(0.8350);transform-origin:0 0;">Calisto Queirós</div>
<div class="t" style="left:485.00px;top:459.65px;font-size:8.4px;color:#72164f;-webkit-text-stroke:0.2px #72164f;transform:scaleX(0.8350);transform-origin:0 0;">Ribeirão PirRS</div>
<div class="t" style="left:581.80px;top:459.65px;font-size:8.4px;color:#8a2068;-webkit-text-stroke:0.2px #8a2068;transform:scaleX(0.8350);transform-origin:0 0;">PBI1926495</div>
<div class="t" style="left:715.89px;top:459.65px;font-size:8.4px;color:#fff;-webkit-text-stroke:0.15px #fff;transform:scaleX(0.9000);transform-origin:0 0;">48</div>
<div class="a" style="left:370.80px;top:468.92px;width:300.00px;height:10.74px;background:#f391c5;"></div>
<div class="t" style="left:373.80px;top:470.39px;font-size:8.4px;color:#ffffff;-webkit-text-stroke:0.2px #ffffff;transform:scaleX(0.8350);transform-origin:0 0;">Cassandra Regueira</div>
<div class="t" style="left:485.00px;top:470.39px;font-size:8.4px;color:#ffffff;-webkit-text-stroke:0.2px #ffffff;transform:scaleX(0.8350);transform-origin:0 0;">SRSretos</div>
<div class="t" style="left:581.80px;top:470.39px;font-size:8.4px;color:#ffffff;-webkit-text-stroke:0.2px #ffffff;transform:scaleX(0.8350);transform-origin:0 0;">PBI1906787</div>
<div class="t" style="left:715.89px;top:470.39px;font-size:8.4px;color:#fff;-webkit-text-stroke:0.15px #fff;transform:scaleX(0.9000);transform-origin:0 0;">46</div>
<div class="a" style="left:370.80px;top:479.66px;width:300.00px;height:10.74px;background:#e954a4;"></div>
<div class="t" style="left:373.80px;top:481.13px;font-size:8.4px;color:#651248;-webkit-text-stroke:0.2px #651248;transform:scaleX(0.8350);transform-origin:0 0;">Cátia Cruz</div>
<div class="t" style="left:485.00px;top:481.13px;font-size:8.4px;color:#72164f;-webkit-text-stroke:0.2px #72164f;transform:scaleX(0.8350);transform-origin:0 0;">CarapicuíSP</div>
<div class="t" style="left:581.80px;top:481.13px;font-size:8.4px;color:#8a2068;-webkit-text-stroke:0.2px #8a2068;transform:scaleX(0.8350);transform-origin:0 0;">PBI1532335</div>
<div class="t" style="left:715.89px;top:481.13px;font-size:8.4px;color:#fff;-webkit-text-stroke:0.15px #fff;transform:scaleX(0.9000);transform-origin:0 0;">27</div>
<div class="a" style="left:370.80px;top:490.40px;width:300.00px;height:10.74px;background:#f391c5;"></div>
<div class="t" style="left:373.80px;top:491.87px;font-size:8.4px;color:#ffffff;-webkit-text-stroke:0.2px #ffffff;transform:scaleX(0.8350);transform-origin:0 0;">Célia Camacho</div>
<div class="t" style="left:485.00px;top:491.87px;font-size:8.4px;color:#ffffff;-webkit-text-stroke:0.2px #ffffff;transform:scaleX(0.8350);transform-origin:0 0;">Gravataí</div>
<div class="t" style="left:581.80px;top:491.87px;font-size:8.4px;color:#ffffff;-webkit-text-stroke:0.2px #ffffff;transform:scaleX(0.8350);transform-origin:0 0;">PBI123213</div>
<div class="t" style="left:720.10px;top:491.87px;font-size:8.4px;color:#fff;-webkit-text-stroke:0.15px #fff;transform:scaleX(0.9000);transform-origin:0 0;">9</div>
<div class="a" style="left:370.80px;top:501.14px;width:300.00px;height:10.74px;background:#e954a4;"></div>
<div class="t" style="left:373.80px;top:502.61px;font-size:8.4px;color:#651248;-webkit-text-stroke:0.2px #651248;transform:scaleX(0.8350);transform-origin:0 0;">Clarisse Galindo</div>
<div class="t" style="left:485.00px;top:502.61px;font-size:8.4px;color:#72164f;-webkit-text-stroke:0.2px #72164f;transform:scaleX(0.8350);transform-origin:0 0;">Feira de Santana</div>
<div class="t" style="left:581.80px;top:502.61px;font-size:8.4px;color:#8a2068;-webkit-text-stroke:0.2px #8a2068;transform:scaleX(0.8350);transform-origin:0 0;">PBI1818101</div>
<div class="t" style="left:715.89px;top:502.61px;font-size:8.4px;color:#fff;-webkit-text-stroke:0.15px #fff;transform:scaleX(0.9000);transform-origin:0 0;">37</div>
<div class="a" style="left:370.80px;top:328.40px;width:355.60px;height:1.00px;background:#2f478c;"></div>
<div class="a" style="left:481.30px;top:329.50px;width:1.00px;height:182.50px;background:#5b6fd0;opacity:.85;"></div>
<div class="a" style="left:578.30px;top:329.50px;width:0.80px;height:182.50px;background:#c94a93;opacity:.7;"></div>
<div class="a" style="left:728.60px;top:303.80px;width:4.70px;height:207.70px;background:#ffffff;"></div>
<div class="a" style="left:728.60px;top:303.80px;width:4.70px;height:8.20px;background:#e6e6e6;"></div>
<svg style="left:729.300px;top:306.500px" width="3.400" height="2.600" viewBox="0 0 3.400 2.600" fill="none"><path d="M0.200 2.400L1.700 0.400L3.200 2.400" stroke="#555" stroke-width=".700"/></svg>
<div class="a" style="left:729.90px;top:318.80px;width:2.60px;height:38.00px;background:#cdcdcd;"></div>
<!-- sec_panes -->
<div class="a" style="left:753.00px;top:128.50px;width:27.60px;height:393.30px;background:#ffffff;border-left:1px solid #e1dfdd;"></div>
<div class="a" style="left:780.60px;top:128.50px;width:65.40px;height:422.50px;background:#f0f0ee;border-left:1px solid #e1dfdd;"></div>
<svg style="left:762px;top:139px" width="12" height="10" viewBox="0 0 12 10" fill="none"><path d="M5.500 0.500L1 5l4.500 4.500 M10.800 0.500L6.300 5l4.500 4.500" stroke="#3b3a39" stroke-width="1.200"/></svg>
<svg style="left:764px;top:164.5px" width="11" height="11" viewBox="0 0 11 11" fill="none"><path d="M10.200 0.600V10.400L5.200 7H0.800V4H5.200Z" stroke="#3b3a39" stroke-width="1.200" stroke-linejoin="round"/></svg>
<div class="t" style="left:772.500px;top:181.500px;font-size:13px;-webkit-text-stroke:0.450px #252423;color:#252423;transform-origin:0 0;transform:rotate(90deg) scaleX(1.0737);">Filtros</div>
<div class="t" style="left:788.70px;top:138.43px;font-size:15.5px;color:#252423;-webkit-text-stroke:0.45px #252423;transform:scaleX(0.9279);transform-origin:0 0;">Visualiza</div>
<div class="t" style="left:788.70px;top:162.98px;font-size:11.5px;color:#252423;-webkit-text-stroke:0.3px #252423;transform:scaleX(0.8694);transform-origin:0 0;">Criar visual</div>
<div class="a" style="left:788.70px;top:178.40px;width:27.10px;height:26.90px;background:#d2d0ce;border-radius:2px;"></div>
<svg style="left:788.7px;top:178.4px" width="27.1" height="26.9" viewBox="0 0 27.1 26.9" fill="none"><path d="M3.500 3.800h16" stroke="#484644" stroke-width="1.100"/>
<rect x="3.500" y="8" width="19.800" height="6.500" fill="#0e7a6d" stroke="#0a5049" stroke-width=".800" stroke-dasharray="1.200 1"/>
<rect x="3.500" y="17" width="19.800" height="6.500" fill="#0e7a6d" stroke="#0a5049" stroke-width=".800" stroke-dasharray="1.200 1"/></svg>
<svg style="left:781px;top:208px" width="60" height="10" viewBox="0 0 60 10" fill="none"><path d="M0 8.700h14l7-7.200 7 7.200h32" stroke="#bebcba" stroke-width="1.100" fill="#f0f0ee"/></svg>
<svg style="left:790px;top:227.3px" width="17" height="16" viewBox="0 0 17 16" fill="none"><path d="M1 0.500v15h15.500" stroke="#4f4e4c" stroke-width="1.200"/><rect x="2" y="2.500" width="9" height="4" fill="#2b88d8"/><rect x="5.500" y="3.500" width="3.500" height="2" fill="#9cc8f0"/><rect x="2" y="8.500" width="13" height="4" fill="#b3b0ad" stroke="#4f4e4c" stroke-width=".600"/></svg>
<svg style="left:813.3px;top:227.3px" width="17" height="16" viewBox="0 0 17 16" fill="none"><path d="M1 0.500v15h15.500" stroke="#4f4e4c" stroke-width="1.200"/><rect x="3.500" y="3.500" width="4.500" height="11" fill="#2b88d8" stroke="#4f4e4c" stroke-width=".600"/><rect x="5" y="6" width="1.800" height="4" fill="#cfe4f7"/><rect x="10" y="5.500" width="4.500" height="9" fill="#c8c6c4" stroke="#4f4e4c" stroke-width=".800"/></svg>
<svg style="left:837.5px;top:227.3px" width="4" height="16" viewBox="0 0 4 16" fill="none"><rect x="0.500" y="1" width="4" height="6" fill="#2b88d8"/><rect x="0.500" y="9" width="4" height="5" fill="#4f4e4c"/></svg>
<svg style="left:790px;top:251px" width="17" height="16" viewBox="0 0 17 16" fill="none"><path d="M1 0.500v15h15.500" stroke="#4f4e4c" stroke-width="1.200"/><path d="M1.500 11.500l4.500-6 3.500 4 5.500-6" stroke="#4f4e4c" stroke-width="1.100"/><path d="M1.500 13.500l5-5 3 3 5.500-6.500" stroke="#2b88d8" stroke-width="1.100"/></svg>
<svg style="left:813.3px;top:251px" width="17" height="16" viewBox="0 0 17 16" fill="none"><path d="M9.500 7.500l3-4.500 3.500 6v6h-3z" fill="#c8c6c4" stroke="#4f4e4c" stroke-width="1"/><path d="M0.800 15.200v-3.700l5.200-9 6.500 10" fill="#fbfbfa" stroke="#4f4e4c" stroke-width="1.100"/><path d="M0.800 15.200v-4l2.200-.5 2.500 2.200 4-4.700 6.500 7z" fill="#4a9be0" stroke="#2b7fd0" stroke-width=".700"/></svg>
<svg style="left:837.5px;top:251px" width="4" height="16" viewBox="0 0 4 16" fill="none"><rect x="0.500" y="3" width="4" height="10" fill="#2b88d8"/><path d="M0.500 1v14.500" stroke="#4f4e4c" stroke-width="1.200"/></svg>
<svg style="left:790px;top:275px" width="17" height="16" viewBox="0 0 17 16" fill="none"><path d="M1 0.500v15h15.500" stroke="#4f4e4c" stroke-width="1.200"/><rect x="2.500" y="6" width="3.500" height="9" fill="#c8c6c4" stroke="#4f4e4c" stroke-width=".800"/><rect x="6" y="9" width="3.500" height="6" fill="#c8c6c4" stroke="#4f4e4c" stroke-width=".800"/><path d="M9.500 15V5.500h2.500V1.500h3.500V15" fill="#2b88d8" stroke="#4f4e4c" stroke-width=".800"/><rect x="12.500" y="3" width="1.800" height="10" fill="#f0f0ee"/></svg>
<svg style="left:813.3px;top:275px" width="17" height="16" viewBox="0 0 17 16" fill="none"><rect x="0.500" y="1" width="16" height="4.500" fill="#2b88d8"/><rect x="3" y="6.500" width="11" height="4" fill="#2b88d8"/><rect x="5.500" y="11.500" width="6" height="3.500" fill="#2b88d8"/></svg>
<svg style="left:837.5px;top:275px" width="4" height="16" viewBox="0 0 4 16" fill="none"><path d="M1 0.500v15" stroke="#4f4e4c" stroke-width="1.300"/></svg>
<svg style="left:790px;top:298.5px" width="17" height="17" viewBox="0 0 17 17" fill="none"><circle cx="8.800" cy="7.300" r="5.600" fill="#eef6ef" stroke="#3f3e3c" stroke-width="1.700"/><path d="M6.200 4.200c1.500-1.200 3.500-.8 3.200 .6s-2.400 .8-2.900 2.400c.6 1.400 2.200 1.600 3 .6 M11.200 5.200c1 .8 1.200 2.200 .2 3.400" stroke="#1f9d55" stroke-width="1.800" stroke-linecap="round"/><path d="M8.800 13v2 M5.300 15.600h7" stroke="#3f3e3c" stroke-width="1.300"/></svg>
<svg style="left:813.3px;top:298.5px" width="17" height="16" viewBox="0 0 17 16" fill="none"><path d="M1 2.500l4-1.500 3 1.500 4-1.500 4.500 1.500v9l-3 3.500-4.500-1-4 1.500-4-3.500z" fill="#b3b0ad" stroke="#4f4e4c" stroke-width=".800"/><path d="M1 2.500l4-1.500 3 1.500-.5 4.500-3.500 1.500-3-1z" fill="#2b88d8"/><path d="M9 9.500l4-1 3.500 2.500-3 3.500-4.500-1z" fill="#2b88d8"/></svg>
<svg style="left:837.5px;top:298.5px" width="4" height="16" viewBox="0 0 4 16" fill="none"><path d="M1 11l3-4" stroke="#4f4e4c" stroke-width="1.200"/></svg>
<svg style="left:790px;top:322.3px" width="17" height="17" viewBox="0 0 17 17" fill="none"><rect x="0.800" y="0.800" width="15" height="13.500" stroke="#4f4e4c" stroke-width="1.200"/><path d="M0.800 4h15" stroke="#4f4e4c" stroke-width="1.200"/><rect x="3" y="6" width="2.200" height="2.200" stroke="#4f4e4c" stroke-width=".800"/><rect x="3" y="10" width="2.200" height="2.200" stroke="#4f4e4c" stroke-width=".800"/><path d="M8.500 7h8l-3 3.500v5l-2-1.200v-3.800z" fill="#f0f0ee" stroke="#4f4e4c" stroke-width="1.100"/></svg>
<svg style="left:813.3px;top:322.3px" width="17" height="17" viewBox="0 0 17 17" fill="none"><rect x="0.800" y="0.800" width="15.400" height="14.400" stroke="#4f4e4c" stroke-width="1.200"/><path d="M0.800 4.500h15.400 M0.800 8h15.400 M0.800 11.500h15.400 M6 4.500v10.700 M11 4.500v10.700" stroke="#4f4e4c" stroke-width="1"/><rect x="0.800" y="0.800" width="15.400" height="3.700" fill="#c8c6c4"/></svg>
<svg style="left:837.5px;top:322.3px" width="4" height="16" viewBox="0 0 4 16" fill="none"><path d="M1 0.500v15" stroke="#4f4e4c" stroke-width="1.300"/><path d="M1 4.500h3 M1 8h3 M1 11.500h3" stroke="#4f4e4c" stroke-width="1"/></svg>
<svg style="left:790px;top:346px" width="17" height="16" viewBox="0 0 17 16" fill="none"><path d="M6 7.500h3 M9 2.500v10 M9 2.500h2 M9 7.500h2 M9 12.500h2" stroke="#2b88d8" stroke-width="1.100"/><rect x="0.800" y="5.500" width="5" height="4" fill="#2b88d8"/><rect x="11" y="0.500" width="5" height="4" fill="#8fc2ee" stroke="#2b88d8" stroke-width=".800"/><rect x="11" y="5.500" width="5" height="4" fill="#8fc2ee" stroke="#2b88d8" stroke-width=".800"/><rect x="11" y="10.500" width="5" height="4" fill="#8fc2ee" stroke="#2b88d8" stroke-width=".800"/></svg>
<svg style="left:813.3px;top:346px" width="17" height="16" viewBox="0 0 17 16" fill="none"><path d="M1 1h15v10h-8.500l-4 4v-4h-2.500z" stroke="#2b88d8" stroke-width="1.300"/></svg>
<svg style="left:837.5px;top:346px" width="4" height="16" viewBox="0 0 4 16" fill="none"><path d="M0.500 5h3.500" stroke="#2b88d8" stroke-width="1.300"/></svg>
<svg style="left:790px;top:370.5px" width="17" height="16" viewBox="0 0 17 16" fill="none"><path d="M8.500 0.800l7.500 7-7.500 7-7.500-7z" stroke="#a13fb5" stroke-width="1.300"/><path d="M5 4.300l7 7 M12 4.300l-7 7" stroke="#a13fb5" stroke-width="1.100"/></svg>
<svg style="left:813.3px;top:370.5px" width="17" height="16" viewBox="0 0 17 16" fill="none"><path d="M1 1h8.500l6.500 6.800-6.500 6.800h-8.500l6.500-6.800z" stroke="#2b88d8" stroke-width="1.300"/><path d="M5 14.600l6.500-6.800" stroke="#2b88d8" stroke-width="1.300"/></svg>
<div class="a" style="left:786.00px;top:393.00px;width:60.00px;height:1.00px;background:#e9e9e7;"></div>
<div class="a" style="left:788.70px;top:401.00px;width:17.10px;height:14.00px;background:#323130;"></div>
<div class="t" style="left:789.50px;top:404.82px;font-size:6.5px;color:#e8e8e8;font-weight:bold;transform:scaleX(0.7812);transform-origin:0 0;">ABC</div>
<svg style="left:800.8px;top:406px" width="3.5" height="3.8" viewBox="0 0 3.5 3.8" fill="none"><path d="M1.750 0L3.500 3.800H0z" fill="#35d04a"/></svg>
<div class="t" style="left:804.30px;top:404.82px;font-size:6.5px;color:#e8e8e8;font-weight:bold;transform:scaleX(0.7883);transform-origin:0 0;clip-path:inset(0 40% 0 0);">C</div>
<div class="a" style="left:782.00px;top:426.30px;width:64.00px;height:1.00px;background:#e1dfdd;"></div>
<div class="t" style="left:791.80px;top:435.44px;font-size:12px;color:#3b3a39;transform:scaleX(0.8141);transform-origin:0 0;">Valores</div>
<div class="a" style="left:785.20px;top:452.50px;width:59.80px;height:23.50px;background:#ffffff;border:1px dotted #b3b0ad;"></div>
<div class="t" style="left:794.50px;top:458.28px;font-size:11.5px;color:#484644;transform:scaleX(0.8656);transform-origin:0 0;">Adicionar</div>
<div class="t" style="left:792.00px;top:486.64px;font-size:12px;color:#323130;-webkit-text-stroke:0.35px #323130;transform:scaleX(0.9806);transform-origin:0 0;">Drill-throu</div>
<div class="t" style="left:792.00px;top:507.34px;font-size:12px;color:#484644;transform:scaleX(0.8717);transform-origin:0 0;">Relatório c</div>
<div class="t" style="left:792.00px;top:530.14px;font-size:12px;color:#484644;transform:scaleX(0.8891);transform-origin:0 0;">Manter tod</div>
<div class="a" style="left:-6.00px;top:128.50px;width:852.00px;height:3.00px;background:none;background:linear-gradient(to bottom,rgba(0,0,0,.10),rgba(0,0,0,0));"></div>
<!-- sec_bottom -->
<div class="a" style="left:-6.00px;top:521.80px;width:787.50px;height:29.70px;background:#f0f0ee;"></div>
<div class="a" style="left:-6.00px;top:551.50px;width:852.00px;height:24.50px;background:#efefed;border-top:1px solid #e2e2e0;"></div>
<svg style="left:40px;top:532px" width="5" height="9" viewBox="0 0 5 9"><path d="M4.500 0.500L0.500 4.500l4 4z" fill="#c8c6c4"/></svg>
<svg style="left:58px;top:532px" width="5" height="9" viewBox="0 0 5 9"><path d="M0.500 0.500L4.500 4.500l-4 4z" fill="#c8c6c4"/></svg>
<div class="a" style="left:68.30px;top:521.80px;width:148.40px;height:26.20px;background:#ffffff;"></div>
<div class="a" style="left:68.30px;top:547.80px;width:148.40px;height:3.20px;background:#117865;"></div>
<div class="t" style="left:86.00px;top:531.32px;font-size:10.8px;color:#252423;-webkit-text-stroke:0.2px #252423;transform:scaleX(0.8782);transform-origin:0 0;">DASHBOARD LOGISTICA</div>
<div class="a" style="left:216.70px;top:522.70px;width:33.30px;height:26.60px;background:#117865;"></div>
<svg style="left:228.500px;top:531.500px" width="10" height="10" viewBox="0 0 10 10"><path d="M5 0.500v9 M0.500 5h9" stroke="#fff" stroke-width="2.200"/></svg>
<div class="t" style="left:4.00px;top:556.32px;font-size:10.8px;color:#484644;transform:scaleX(0.9153);transform-origin:0 0;">Página 1 de 1</div>
</div></div></body></html>
